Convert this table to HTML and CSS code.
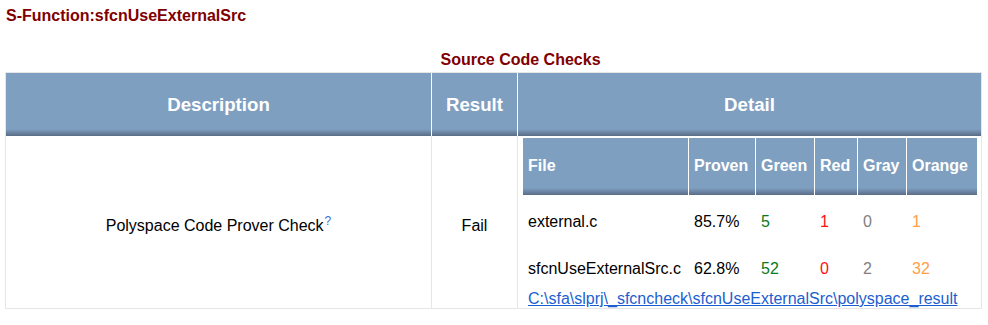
FILE: index.html
```html
<!DOCTYPE html>
<html>
<head>
<meta charset="utf-8">
<link rel="stylesheet" href="styles.css">
</head>
<body>
<div class="page">
  <h1 class="title">S-Function:sfcnUseExternalSrc</h1>
  <table class="checks">
    <caption>Source Code Checks</caption>
    <colgroup>
      <col class="c-desc">
      <col class="c-result">
      <col class="c-detail">
    </colgroup>
    <thead>
      <tr>
        <th>Description</th>
        <th>Result</th>
        <th class="last">Detail</th>
      </tr>
    </thead>
    <tbody>
      <tr>
        <td class="mid">Polyspace Code Prover Check<sup class="help">?</sup></td>
        <td class="mid">Fail</td>
        <td class="detail last">
          <table class="inner">
            <colgroup>
              <col class="i-file">
              <col class="i-proven">
              <col class="i-green">
              <col class="i-red">
              <col class="i-gray">
              <col class="i-orange">
            </colgroup>
            <thead>
              <tr>
                <th>File</th>
                <th>Proven</th>
                <th>Green</th>
                <th>Red</th>
                <th>Gray</th>
                <th class="last">Orange</th>
              </tr>
            </thead>
            <tbody>
              <tr class="r1">
                <td>external.c</td>
                <td>85.7%</td>
                <td class="green">5</td>
                <td class="red">1</td>
                <td class="gray">0</td>
                <td class="orange">1</td>
              </tr>
              <tr class="r2">
                <td>sfcnUseExternalSrc.c</td>
                <td>62.8%</td>
                <td class="green">52</td>
                <td class="red">0</td>
                <td class="gray">2</td>
                <td class="orange">32</td>
              </tr>
            </tbody>
          </table>
          <a class="result-link" href="#">C:\sfa\slprj\_sfcncheck\sfcnUseExternalSrc\polyspace_result</a>
        </td>
      </tr>
    </tbody>
  </table>
</div>
</body>
</html>
```
FILE: styles.css
```css
html, body {
  margin: 0;
  padding: 0;
  background: #ffffff;
}

body {
  font-family: "Liberation Sans", Arial, sans-serif;
  font-size: 16px;
  color: #000000;
}

.page {
  padding: 7px 0 0 5px;
}

.title {
  margin: 0;
  padding-left: 1px;
  font-size: 16px;
  font-weight: bold;
  line-height: normal;
  color: #800000;
}

.checks {
  margin-top: 25px;
  width: 977px;
  table-layout: fixed;
  border-collapse: separate;
  border-spacing: 0;
  border-top: 1px solid #e6e6e6;
  border-left: 1px solid #e6e6e6;
}

.checks caption {
  caption-side: top;
  font-size: 16px;
  line-height: 20px;
  font-weight: bold;
  color: #800000;
  padding: 0 0 2px 54px;
  text-align: center;
}

.c-desc { width: 426px; }
.c-result { width: 86px; }
.c-detail { width: 464px; }

.checks > thead > tr > th {
  height: 63px;
  padding: 0;
  box-sizing: border-box;
  background: linear-gradient(to bottom, #7f9fc1 0, #7f9fc1 calc(100% - 7px), #5a6c86 100%);
  color: #ffffff;
  font-size: 18.67px;
  font-weight: bold;
  text-align: center;
  vertical-align: middle;
  border-right: 1px solid #ffffff;
}

.checks > thead > tr > th.last {
  border-right: 1px solid #e6e6e6;
}

.checks > tbody > tr > td {
  padding: 0;
  border-right: 1px solid #e6e6e6;
  border-bottom: 1px solid #e6e6e6;
}

.checks > tbody > tr > td.mid {
  text-align: center;
  vertical-align: middle;
  padding-top: 8px;
  box-sizing: border-box;
}

.help {
  font-size: 12px;
  color: #3d72cc;
  vertical-align: 6px;
  line-height: 0;
  margin-left: 1px;
}

.checks > tbody > tr > td.detail {
  vertical-align: top;
  padding: 2px 4px 0 5px;
}

.inner {
  width: 454px;
  table-layout: fixed;
  border-collapse: separate;
  border-spacing: 0;
}

.i-file { width: 166px; }
.i-proven { width: 67px; }
.i-green { width: 59px; }
.i-red { width: 43px; }
.i-gray { width: 49px; }
.i-orange { width: 70px; }

.inner th {
  height: 57px;
  padding: 0 0 2px 5px;
  box-sizing: border-box;
  background: linear-gradient(to bottom, #7f9fc1 0, #7f9fc1 calc(100% - 7px), #5a6c86 100%);
  color: #ffffff;
  font-size: 16px;
  font-weight: bold;
  text-align: left;
  vertical-align: middle;
  border-right: 1px solid #ffffff;
  white-space: nowrap;
}

.inner th.last {
  border-right: 0;
}

.inner td {
  padding: 0 0 0 5px;
  text-align: left;
  vertical-align: middle;
  white-space: nowrap;
}

.inner tr.r1 td { height: 54px; }
.inner tr.r2 td { height: 40px; }

.green { color: #0b7a1c; }
.red { color: #ff1010; }
.gray { color: #7f7f7f; }
.orange { color: #ffa049; }

.result-link {
  display: block;
  margin-top: 1px;
  padding-left: 5px;
  line-height: 18px;
  color: #1c5ecf;
  text-decoration: underline;
  white-space: nowrap;
}
```
